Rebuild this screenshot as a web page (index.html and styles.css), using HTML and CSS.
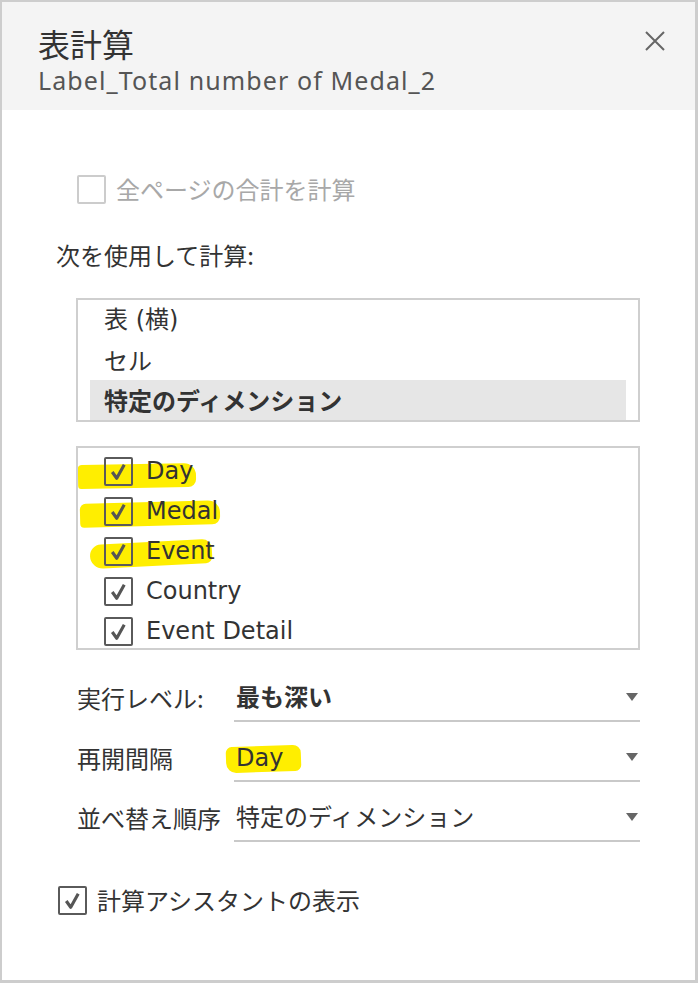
FILE: index.html
```html
<!DOCTYPE html>
<html lang="ja">
<head>
<meta charset="utf-8">
<title>表計算</title>
<link rel="stylesheet" href="styles.css">
</head>
<body>
<div class="dialog">
  <header class="hdr">
    <div class="titles">
      <div class="title">表計算</div>
      <div class="sub">Label_Total number of Medal_2</div>
    </div>
    <button class="close" aria-label="閉じる">
      <svg width="22" height="22" viewBox="0 0 22 22"><path d="M2 2 L20 20 M20 2 L2 20" stroke="#666" stroke-width="2" fill="none"/></svg>
    </button>
  </header>
  <main class="content">
    <div class="chk disabled">
      <span class="box"></span>
      <span class="chk-text">全ページの合計を計算</span>
    </div>
    <div class="section-label">次を使用して計算:</div>
    <div class="listbox list1">
      <div class="item">表 (横)</div>
      <div class="item">セル</div>
      <div class="item selected">特定のディメンション</div>
    </div>
    <div class="listbox list2">
      <div class="citem">
        <span class="hl hl-day"></span>
        <span class="box checked"><svg width="25" height="25" viewBox="0 0 24 24"><path d="M6 12.5 L10.3 18.5 L17.5 5.5" stroke="#555" stroke-width="3" fill="none" stroke-linejoin="round"/></svg></span>
        <span class="ctext">Day</span>
      </div>
      <div class="citem">
        <span class="hl hl-medal"></span>
        <span class="box checked"><svg width="25" height="25" viewBox="0 0 24 24"><path d="M6 12.5 L10.3 18.5 L17.5 5.5" stroke="#555" stroke-width="3" fill="none" stroke-linejoin="round"/></svg></span>
        <span class="ctext">Medal</span>
      </div>
      <div class="citem">
        <span class="hl hl-event"></span>
        <span class="box checked"><svg width="25" height="25" viewBox="0 0 24 24"><path d="M6 12.5 L10.3 18.5 L17.5 5.5" stroke="#555" stroke-width="3" fill="none" stroke-linejoin="round"/></svg></span>
        <span class="ctext">Event</span>
      </div>
      <div class="citem">
        <span class="box checked"><svg width="25" height="25" viewBox="0 0 24 24"><path d="M6 12.5 L10.3 18.5 L17.5 5.5" stroke="#555" stroke-width="3" fill="none" stroke-linejoin="round"/></svg></span>
        <span class="ctext">Country</span>
      </div>
      <div class="citem">
        <span class="box checked"><svg width="25" height="25" viewBox="0 0 24 24"><path d="M6 12.5 L10.3 18.5 L17.5 5.5" stroke="#555" stroke-width="3" fill="none" stroke-linejoin="round"/></svg></span>
        <span class="ctext">Event Detail</span>
      </div>
    </div>
    <div class="fields">
      <div class="field">
        <div class="flabel">実行レベル:</div>
        <div class="fvalue bold"><span class="vtext">最も深い</span><span class="arrow"></span></div>
      </div>
      <div class="field">
        <div class="flabel">再開間隔</div>
        <div class="fvalue"><span class="hl hl-day2"></span><span class="vtext">Day</span><span class="arrow"></span></div>
      </div>
      <div class="field">
        <div class="flabel">並べ替え順序</div>
        <div class="fvalue"><span class="vtext">特定のディメンション</span><span class="arrow"></span></div>
      </div>
    </div>
    <div class="chk assistant">
      <span class="box checked"><svg width="25" height="25" viewBox="0 0 24 24"><path d="M6 12.5 L10.3 18.5 L17.5 5.5" stroke="#555" stroke-width="3" fill="none" stroke-linejoin="round"/></svg></span>
      <span class="chk-text">計算アシスタントの表示</span>
    </div>
  </main>
</div>
</body>
</html>
```
FILE: styles.css
```css
* { box-sizing: border-box; }
html, body { margin: 0; padding: 0; background: #fff; }
body {
  font-family: "DejaVu Sans", "Noto Sans CJK JP", sans-serif;
  color: #333;
  font-size: 24px;
}
.dialog {
  width: 698px;
  height: 983px;
  border-style: solid;
  border-color: #cdcdcd;
  border-width: 2px 3px 3px 2px;
  background: #fff;
  display: flex;
  flex-direction: column;
}
.hdr {
  height: 108px;
  background: #f4f4f4;
  display: flex;
  justify-content: space-between;
  align-items: flex-start;
  padding: 0 29px 0 36px;
  flex: none;
}
.titles { padding-top: 20px; }
.title {
  font-family: "Noto Sans CJK JP", sans-serif;
  font-size: 32px;
  line-height: 42px;
  color: #333;
}
.sub {
  font-family: "Noto Sans", "Noto Sans CJK JP", sans-serif;
  font-size: 25px;
  line-height: 34px;
  letter-spacing: 1.1px;
  color: #555;
  margin-top: -1px;
}
.close {
  border: 0;
  background: none;
  padding: 0;
  margin-top: 28px;
  width: 22px;
  height: 22px;
  display: flex;
}
.content {
  padding: 65px 0 0 54px;
  flex: 1;
}
.chk {
  display: flex;
  align-items: center;
  height: 28px;
  gap: 10px;
}
.box {
  width: 29px;
  height: 29px;
  border: 2px solid #5a5a5a;
  border-radius: 2px;
  display: flex;
  align-items: center;
  justify-content: center;
  flex: none;
  position: relative;
  z-index: 1;
}
.chk.disabled { margin-left: 21px; }
.chk.disabled .box { border-color: #cccccc; }
.chk.disabled .chk-text { color: #a8a8a8; }
.chk-text {
  font-family: "Noto Sans CJK JP", sans-serif;
  line-height: 28px;
}
.section-label {
  font-family: "Noto Sans CJK JP", sans-serif;
  line-height: 32px;
  margin-top: 36px;
}
.listbox {
  margin-left: 20px;
  width: 564px;
  border: 2px solid #cfcfcf;
  overflow: hidden;
}
.list1 {
  margin-top: 27px;
  height: 124px;
  padding: 0 12px;
}
.item {
  height: 40px;
  line-height: 40px;
  padding-left: 14px;
  font-family: "Noto Sans CJK JP", sans-serif;
}
.item:first-child { font-family: "DejaVu Sans", "Noto Sans CJK JP", sans-serif; }
.item.selected {
  background: #e6e6e6;
  font-weight: 700;
}
.list2 {
  margin-top: 24px;
  height: 204px;
  padding: 3px 12px 0;
}
.citem {
  height: 40px;
  display: flex;
  align-items: center;
  padding-left: 14px;
  gap: 13px;
  position: relative;
}
.ctext {
  position: relative;
  z-index: 1;
  line-height: 40px;
}
.hl {
  position: absolute;
  background: #ffee00;
  z-index: 0;
}
.hl-day { left: -12px; width: 118px; top: 13px; height: 24px; border-radius: 4px 12px 8px 3px; transform: rotate(-1deg); }
.hl-medal { left: -10px; width: 140px; top: 11px; height: 24px; border-radius: 6px 12px 8px 4px; transform: rotate(-1.5deg); }
.hl-event { left: 0; width: 122px; top: 11px; height: 24px; border-radius: 14px 12px 8px 16px; transform: rotate(-3deg); }
.fields {
  margin-top: 26px;
  margin-left: 21px;
  width: 563px;
  display: flex;
  flex-direction: column;
  gap: 14px;
}
.field {
  display: flex;
  height: 46px;
}
.flabel {
  width: 157px;
  flex: none;
  line-height: 44px;
  font-family: "Noto Sans CJK JP", sans-serif;
}
.fvalue {
  flex: 1;
  border-bottom: 2px solid #c9c9c9;
  display: flex;
  align-items: center;
  justify-content: space-between;
  padding: 0 2px 0 2px;
  position: relative;
  height: 46px;
}
.fvalue.bold { font-weight: 700; font-family: "Noto Sans CJK JP", sans-serif; }
.vtext { position: relative; z-index: 1; line-height: 44px; font-family: "DejaVu Sans", "Noto Sans CJK JP", sans-serif; }
.arrow {
  width: 0;
  height: 0;
  border-left: 6px solid transparent;
  border-right: 6px solid transparent;
  border-top: 8px solid #666;
  margin-bottom: 2px;
}
.hl-day2 { left: -8px; width: 75px; top: 10px; height: 26px; border-radius: 6px 8px 6px 10px; transform: rotate(-2deg); }
.assistant {
  margin-top: 44px;
  margin-left: 2px;
}
```
